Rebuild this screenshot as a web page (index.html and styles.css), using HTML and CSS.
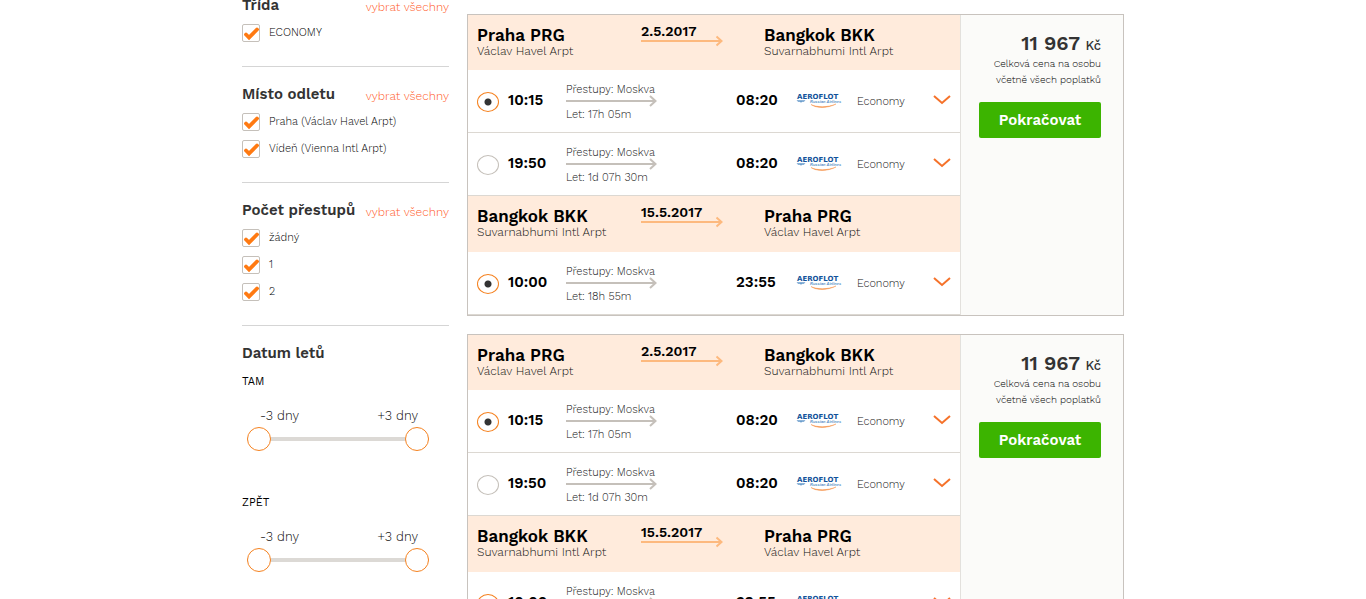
FILE: index.html
```
<!DOCTYPE html>
<html lang="cs">
<head>
    <meta charset="UTF-8">
    <meta name="viewport" content="width=device-width, initial-scale=1.0">
    <title>Letenky Praha - Bangkok</title>
    <link rel="stylesheet" href="styles.css">
</head>
<body>
    <svg class="sprite" aria-hidden="true">
        <symbol id="arrow-date" viewBox="0 0 82 12">
            <path d="M0 6H81M75.500 1.500L80.500 6L75.500 10.500"/>
        </symbol>
        <symbol id="arrow-flight" viewBox="0 0 91 12">
            <path d="M0 6H90M84 1L89.500 6L84 11"/>
        </symbol>
        <symbol id="chevron" viewBox="0 0 18 10">
            <path d="M1 1L9 8L17 1"/>
        </symbol>
        <symbol id="aeroflot" viewBox="0 0 46 18">
            <text x="1" y="8" class="logo-name">AEROFLOT</text>
            <path d="M1 9.500H9L8 10.500H6L5 11.500L4 10.500H2Z" fill="#5b93c8" stroke="#5b93c8" stroke-width=".4"/>
            <text x="14" y="12" class="logo-sub">Russian Airlines</text>
            <path d="M15 13.500C21 16.500 32 16.500 40 13C32 17.500 20 17.500 15 13.500Z" fill="#f58a3c" stroke="#f58a3c" stroke-width=".4"/>
        </symbol>
    </svg>

    <div class="page">
        <aside class="filters">
            <section class="filter">
                <div class="filter-head">
                    <h2>Třída</h2>
                    <a href="#">vybrat všechny</a>
                </div>
                <label class="check"><input type="checkbox" checked> ECONOMY</label>
            </section>
            <section class="filter">
                <div class="filter-head">
                    <h2>Místo odletu</h2>
                    <a href="#">vybrat všechny</a>
                </div>
                <label class="check"><input type="checkbox" checked> Praha (Václav Havel Arpt)</label>
                <label class="check"><input type="checkbox" checked> Vídeň (Vienna Intl Arpt)</label>
            </section>
            <section class="filter">
                <div class="filter-head">
                    <h2>Počet přestupů</h2>
                    <a href="#">vybrat všechny</a>
                </div>
                <label class="check"><input type="checkbox" checked> žádný</label>
                <label class="check"><input type="checkbox" checked> 1</label>
                <label class="check"><input type="checkbox" checked> 2</label>
            </section>
            <section class="filter">
                <div class="filter-head">
                    <h2>Datum letů</h2>
                </div>
                <div class="days">
                    <h3>TAM</h3>
                    <div class="days-labels">
                        <label for="out-min">-3 dny</label>
                        <label for="out-max">+3 dny</label>
                    </div>
                    <div class="range">
                        <input type="range" id="out-min" min="-3" max="3" value="-3">
                        <input type="range" id="out-max" min="-3" max="3" value="3">
                    </div>
                </div>
                <div class="days">
                    <h3>ZPĚT</h3>
                    <div class="days-labels">
                        <label for="back-min">-3 dny</label>
                        <label for="back-max">+3 dny</label>
                    </div>
                    <div class="range">
                        <input type="range" id="back-min" min="-3" max="3" value="-3">
                        <input type="range" id="back-max" min="-3" max="3" value="3">
                    </div>
                </div>
            </section>
        </aside>

        <main class="results">
            <article class="offer">
                <div class="legs">
                    <section class="leg">
                        <header class="leg-head">
                            <div class="place"><h3>Praha PRG</h3><p>Václav Havel Arpt</p></div>
                            <div class="date"><time>2.5.2017</time><svg class="date-arrow"><use href="#arrow-date"/></svg></div>
                            <div class="place"><h3>Bangkok BKK</h3><p>Suvarnabhumi Intl Arpt</p></div>
                        </header>
                        <div class="flight">
                            <input type="radio" name="a-out" id="a-out-1" checked>
                            <label class="time" for="a-out-1">10:15</label>
                            <div class="info"><span>Přestupy: Moskva</span><svg><use href="#arrow-flight"/></svg><span>Let: 17h 05m</span></div>
                            <span class="time">08:20</span>
                            <svg class="logo" role="img" aria-label="Aeroflot"><use href="#aeroflot"/></svg>
                            <span class="cabin">Economy</span>
                            <button class="more" aria-label="Detail letu"><svg><use href="#chevron"/></svg></button>
                        </div>
                        <div class="flight">
                            <input type="radio" name="a-out" id="a-out-2">
                            <label class="time" for="a-out-2">19:50</label>
                            <div class="info"><span>Přestupy: Moskva</span><svg><use href="#arrow-flight"/></svg><span>Let: 1d 07h 30m</span></div>
                            <span class="time">08:20</span>
                            <svg class="logo" role="img" aria-label="Aeroflot"><use href="#aeroflot"/></svg>
                            <span class="cabin">Economy</span>
                            <button class="more" aria-label="Detail letu"><svg><use href="#chevron"/></svg></button>
                        </div>
                    </section>
                    <section class="leg">
                        <header class="leg-head">
                            <div class="place"><h3>Bangkok BKK</h3><p>Suvarnabhumi Intl Arpt</p></div>
                            <div class="date"><time>15.5.2017</time><svg class="date-arrow"><use href="#arrow-date"/></svg></div>
                            <div class="place"><h3>Praha PRG</h3><p>Václav Havel Arpt</p></div>
                        </header>
                        <div class="flight">
                            <input type="radio" name="a-back" id="a-back-1" checked>
                            <label class="time" for="a-back-1">10:00</label>
                            <div class="info"><span>Přestupy: Moskva</span><svg><use href="#arrow-flight"/></svg><span>Let: 18h 55m</span></div>
                            <span class="time">23:55</span>
                            <svg class="logo" role="img" aria-label="Aeroflot"><use href="#aeroflot"/></svg>
                            <span class="cabin">Economy</span>
                            <button class="more" aria-label="Detail letu"><svg><use href="#chevron"/></svg></button>
                        </div>
                    </section>
                </div>
                <div class="price">
                    <strong>11 967 <small>Kč</small></strong>
                    <p>Celková cena na osobu<br>včetně všech poplatků</p>
                    <button class="continue">Pokračovat</button>
                </div>
            </article>

            <article class="offer">
                <div class="legs">
                    <section class="leg">
                        <header class="leg-head">
                            <div class="place"><h3>Praha PRG</h3><p>Václav Havel Arpt</p></div>
                            <div class="date"><time>2.5.2017</time><svg class="date-arrow"><use href="#arrow-date"/></svg></div>
                            <div class="place"><h3>Bangkok BKK</h3><p>Suvarnabhumi Intl Arpt</p></div>
                        </header>
                        <div class="flight">
                            <input type="radio" name="b-out" id="b-out-1" checked>
                            <label class="time" for="b-out-1">10:15</label>
                            <div class="info"><span>Přestupy: Moskva</span><svg><use href="#arrow-flight"/></svg><span>Let: 17h 05m</span></div>
                            <span class="time">08:20</span>
                            <svg class="logo" role="img" aria-label="Aeroflot"><use href="#aeroflot"/></svg>
                            <span class="cabin">Economy</span>
                            <button class="more" aria-label="Detail letu"><svg><use href="#chevron"/></svg></button>
                        </div>
                        <div class="flight">
                            <input type="radio" name="b-out" id="b-out-2">
                            <label class="time" for="b-out-2">19:50</label>
                            <div class="info"><span>Přestupy: Moskva</span><svg><use href="#arrow-flight"/></svg><span>Let: 1d 07h 30m</span></div>
                            <span class="time">08:20</span>
                            <svg class="logo" role="img" aria-label="Aeroflot"><use href="#aeroflot"/></svg>
                            <span class="cabin">Economy</span>
                            <button class="more" aria-label="Detail letu"><svg><use href="#chevron"/></svg></button>
                        </div>
                    </section>
                    <section class="leg">
                        <header class="leg-head">
                            <div class="place"><h3>Bangkok BKK</h3><p>Suvarnabhumi Intl Arpt</p></div>
                            <div class="date"><time>15.5.2017</time><svg class="date-arrow"><use href="#arrow-date"/></svg></div>
                            <div class="place"><h3>Praha PRG</h3><p>Václav Havel Arpt</p></div>
                        </header>
                        <div class="flight">
                            <input type="radio" name="b-back" id="b-back-1" checked>
                            <label class="time" for="b-back-1">10:00</label>
                            <div class="info"><span>Přestupy: Moskva</span><svg><use href="#arrow-flight"/></svg><span>Let: 18h 55m</span></div>
                            <span class="time">23:55</span>
                            <svg class="logo" role="img" aria-label="Aeroflot"><use href="#aeroflot"/></svg>
                            <span class="cabin">Economy</span>
                            <button class="more" aria-label="Detail letu"><svg><use href="#chevron"/></svg></button>
                        </div>
                    </section>
                </div>
                <div class="price">
                    <strong>11 967 <small>Kč</small></strong>
                    <p>Celková cena na osobu<br>včetně všech poplatků</p>
                    <button class="continue">Pokračovat</button>
                </div>
            </article>
        </main>
    </div>
</body>
</html>
```
FILE: styles.css
```
* {
    box-sizing: border-box;
}
body {
    margin: 0;
    background: #fff;
    color: #333;
    font-family: "Work Sans", Inter, "Liberation Sans", sans-serif;
    font-size: 12px;
    line-height: 16px;
}
h2, h3, p {
    margin: 0;
}
button, input {
    margin: 0;
    font-family: inherit;
}
.sprite {
    display: none;
}
.page {
    display: flex;
    gap: 18px;
    max-width: 882px;
    margin: 0 auto;
}

/* filters */
.filters {
    flex: 0 0 207px;
    margin-top: -22px;
}
.filter {
    display: flex;
    flex-direction: column;
    gap: 9px;
    padding: 16px 0 24px;
    border-bottom: 1px solid #d5d5d5;
}
.filter:last-child {
    border-bottom: 0;
}
.filter-head {
    display: flex;
    justify-content: space-between;
    height: 21px;
    line-height: 22px;
    white-space: nowrap;
}
.filter-head h2 {
    font-size: 15px;
    font-weight: 600;
}
.filter-head a {
    padding-top: 2px;
    color: #ff5a1f;
    font-weight: 300;
    text-decoration: none;
}
.check {
    display: flex;
    align-items: center;
    gap: 9px;
    height: 18px;
    color: #000;
    font-size: 11px;
    font-weight: 300;
}
.check input {
    appearance: none;
    width: 18px;
    height: 18px;
    border: 1px solid #c5c0ba;
    border-radius: 2px;
    background: #fff;
}
.check input:checked {
    background: #fff url("data:image/svg+xml,%3Csvg xmlns='http://www.w3.org/2000/svg' viewBox='0 0 16 16'%3E%3Cpath d='M3 9.500L6 12.500L14 4.500' fill='none' stroke='%23ff7a12' stroke-width='3.800' stroke-linecap='round'/%3E%3C/svg%3E") center / 16px no-repeat;
}
.days {
    display: flex;
    flex-direction: column;
    height: 112px;
    padding-top: 2px;
}
.days h3 {
    color: #000;
    font-size: 11px;
    font-weight: 400;
}
.days-labels {
    display: flex;
    justify-content: space-between;
    padding: 18px 31px 3px 18px;
    color: #111;
    font-size: 13px;
    font-weight: 300;
}
.range {
    display: grid;
    align-items: center;
    width: 182px;
    height: 24px;
    margin-left: 5px;
    background: linear-gradient(#dcd9d5, #dcd9d5) center / 100% 4px no-repeat;
}
.range input {
    grid-area: 1 / 1;
    appearance: none;
    width: 100%;
    height: 24px;
    background: none;
    pointer-events: none;
}
.range input::-webkit-slider-thumb {
    appearance: none;
    width: 24px;
    height: 24px;
    border: 1px solid #f58220;
    border-radius: 50%;
    background: #fff;
    pointer-events: auto;
}

/* results */
.results {
    flex: 1;
    display: flex;
    flex-direction: column;
    gap: 18px;
    padding-top: 14px;
}
.offer {
    display: flex;
    border: 1px solid #c8c3be;
}
.legs {
    flex: 1;
}
.leg-head {
    display: grid;
    grid-template-columns: 164px 123px 1fr;
    height: 55px;
    padding-left: 9px;
    background: #ffebdc;
}
.leg + .leg .leg-head {
    height: 56px;
}
.place {
    padding-top: 12px;
}
.place h3 {
    color: #000;
    font-size: 17px;
    font-weight: 600;
    line-height: 16px;
}
.place p {
    color: #111;
    font-weight: 300;
}
.date {
    display: flex;
    flex-direction: column;
    padding-top: 8px;
    color: #000;
    font-size: 14px;
    font-weight: 600;
}
.date-arrow {
    width: 82px;
    height: 12px;
    margin-top: -4px;
    fill: none;
    stroke: #fdb97e;
    stroke-width: 2px;
}
.flight {
    display: grid;
    grid-template-columns: 31px 58px 170px 60px 61px 76px 1fr;
    align-items: center;
    height: 63px;
    padding: 0 0 2px 9px;
    border-bottom: 1px solid #dcd8d2;
}
.flight input {
    appearance: none;
    width: 22px;
    height: 20px;
    margin-top: 4px;
    border: 1px solid #c5c0ba;
    border-radius: 50%;
    background: #fff;
}
.flight input:checked {
    border-color: #f58220;
    background: radial-gradient(circle, #333 3px, #fff 4px);
}
.time {
    color: #000;
    font-size: 15px;
    font-weight: 600;
}
.info {
    display: flex;
    flex-direction: column;
    padding-top: 4px;
    color: #111;
    font-size: 11px;
    font-weight: 300;
}
.info svg {
    width: 91px;
    height: 12px;
    margin: -3px 0 0;
    fill: none;
    stroke: #c5c0ba;
    stroke-width: 2px;
}
.logo {
    width: 46px;
    height: 18px;
}
.logo-name {
    fill: #13539b;
    font: bold 7px "DejaVu Sans", sans-serif;
}
.logo-sub {
    fill: #5b93c8;
    font: italic bold 4px "Liberation Sans", sans-serif;
}
.cabin {
    padding-top: 3px;
    color: #111;
    font-size: 11px;
    font-weight: 300;
}
.more {
    width: 18px;
    padding: 0;
    border: 0;
    background: none;
    cursor: pointer;
}
.more svg {
    display: block;
    width: 18px;
    height: 10px;
    fill: none;
    stroke: #f5722a;
    stroke-width: 2px;
}
.price {
    flex: 0 0 163px;
    padding: 18px 22px 0 18px;
    border-left: 1px solid #e3e1dd;
    background: #fbfbf9;
    text-align: right;
}
.price strong {
    display: block;
    font-size: 20px;
    font-weight: 600;
    line-height: 20px;
}
.price small {
    font-size: 13px;
    font-weight: 500;
}
.price p {
    color: #000;
    font-size: 10px;
    font-weight: 300;
    white-space: nowrap;
}
.continue {
    width: 100%;
    height: 36px;
    margin-top: 14px;
    padding: 0;
    border: 0;
    border-radius: 2px;
    background: #3cb400;
    color: #fff;
    font-size: 15px;
    font-weight: 600;
    cursor: pointer;
}
```
